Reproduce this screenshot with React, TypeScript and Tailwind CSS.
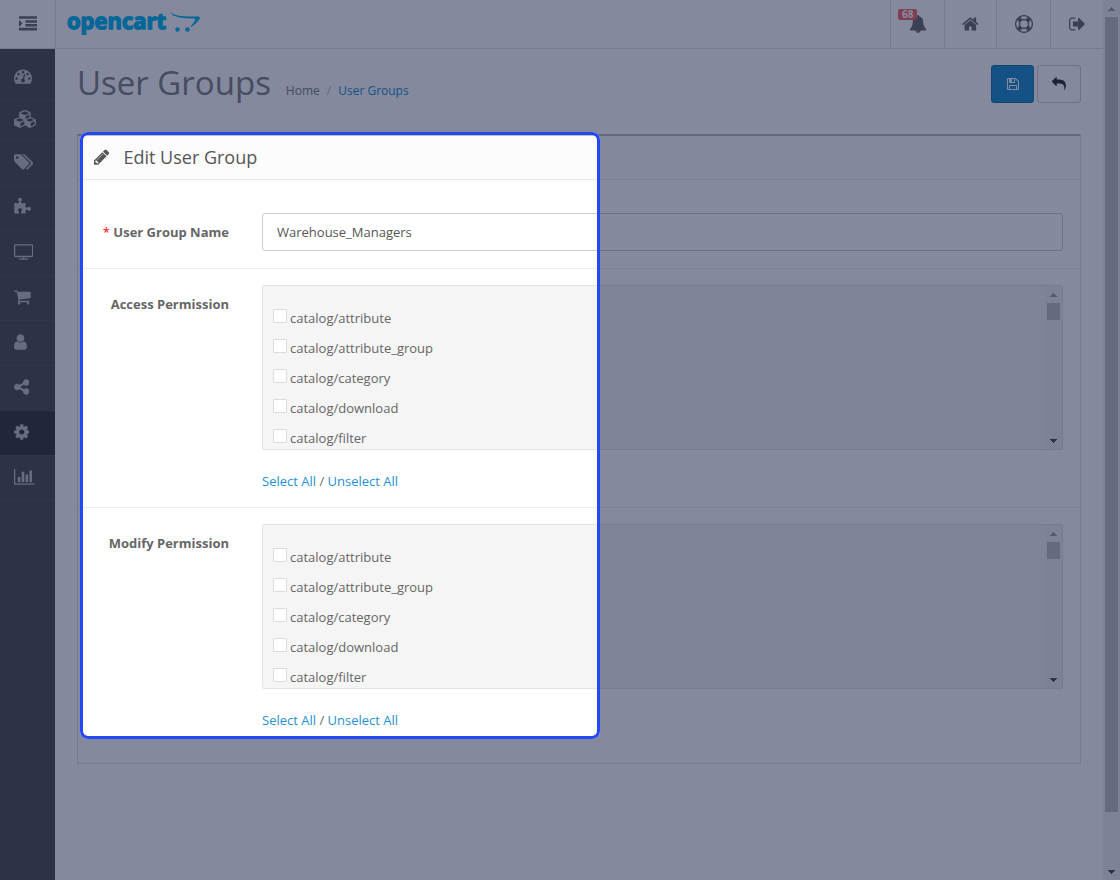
import { useState } from "react";

// [left edge, width, path] on a 1792 units high canvas
const icons: Record<string, [number, number, string]> = {
  indent: [0, 1792, "M352 832q0 14-9 23l-288 288q-9 9-23 9-13 0-22.500-9.500t-9.500-22.500v-576q0-13 9.500-22.500t22.500-9.500q14 0 23 9l288 288q9 9 9 23zM0 1280h1792v256H0zM640 896h1152v256H640zM640 512h1152v256H640zM0 128h1792v256H0z"],
  bell: [0, 1792, "M912 1696q0-16-16-16-59 0-101.500-42.500t-42.500-101.500q0-16-16-16t-16 16q0 73 51.500 124.500t124.500 51.500q16 0 16-16zm816-288q0 52-38 90t-90 38h-448q0 106-75 181t-181 75-181-75-75-181h-448q-52 0-90-38t-38-90q50-42 91-88t85-119.500 74.500-158.500 50-206 19.500-260q0-152 117-282.500t307-158.500q-8-19-8-39 0-40 28-68t68-28 68 28 28 68q0 20-8 39 190 28 307 158.500t117 282.500q0 139 19.500 260t50 206 74.500 158.500 85 119.500 91 88z"],
  home: [64, 1664, "M1472 992v480q0 26-19 45t-45 19h-384v-384h-256v384h-384q-26 0-45-19t-19-45v-480q0-1 .5-3t.5-3l575-474 575 474q1 2 1 6zm223-69l-62 74q-8 9-21 11h-3q-13 0-21-7l-692-577-692 577q-12 8-24 7-13-2-21-11l-62-74q-8-10-7-23.500t11-21.500l719-599q32-26 76-26t76 26l244 204v-195q0-14 9-23t23-9h192q14 0 23 9t9 23v408l219 182q10 8 11 21.500t-7 23.500z"],
  ring: [0, 1792, "M896 0q182 0 348 71t286 191 191 286 71 348-71 348-191 286-286 191-348 71-348-71-286-191-191-286-71-348 71-348 191-286 286-191 348-71zm0 128q-190 0-361 90l194 194q82-28 167-28t167 28l194-194q-171-90-361-90zm-678 1129l194-194q-28-82-28-167t28-167l-194-194q-90 171-90 361t90 361zm678 407q190 0 361-90l-194-194q-82 28-167 28t-167-28l-194 194q171 90 361 90zm0-384q159 0 271.500-112.500t112.500-271.500-112.500-271.500-271.500-112.500-271.500 112.500-112.500 271.500 112.500 271.500 271.500 112.500zm484-217l194 194q90-171 90-361t-90-361l-194 194q28 82 28 167t-28 167z"],
  signOut: [64, 1664, "M704 1440q0 4 1 20t.5 26.500-3 23.500-10 19.500-20.500 6.500h-320q-119 0-203.500-84.500t-84.500-203.500v-704q0-119 84.500-203.500t203.500-84.500h320q13 0 22.500 9.500t9.500 22.500q0 4 1 20t.5 26.500-3 23.500-10 19.500-20.500 6.500h-320q-66 0-113 47t-47 113v704q0 66 47 113t113 47h312l11.500 1 11.500 3 8 5.500 7 9 2 13.500zm928-544q0 26-19 45l-544 544q-19 19-45 19t-45-19-19-45v-288h-448q-26 0-45-19t-19-45v-384q0-26 19-45t45-19h448v-288q0-26 19-45t45-19 45 19l544 544q19 19 19 45z"],
  dashboard: [0, 1792, "M384 1152q0-53-37.500-90.500t-90.500-37.500-90.500 37.500-37.500 90.500 37.500 90.500 90.500 37.500 90.500-37.500 37.500-90.500zm192-448q0-53-37.500-90.500t-90.500-37.500-90.500 37.500-37.500 90.500 37.500 90.500 90.500 37.500 90.500-37.500 37.500-90.500zm428 481l101-382q6-26-7.500-48.500t-38.500-29.500-48 6.500-30 39.500l-101 382q-60 5-107 43.500t-63 98.500q-20 77 20 146t117 89 146-20 89-117q16-60-6-117t-72-91zm660-33q0-53-37.500-90.500t-90.500-37.500-90.500 37.500-37.500 90.500 37.500 90.500 90.500 37.500 90.500-37.500 37.500-90.500zm-640-640q0-53-37.500-90.500t-90.500-37.500-90.500 37.500-37.500 90.500 37.500 90.500 90.500 37.500 90.500-37.500 37.500-90.500zm448 192q0-53-37.500-90.500t-90.500-37.500-90.500 37.500-37.500 90.500 37.500 90.500 90.500 37.500 90.500-37.500 37.500-90.500zm320 448q0 261-141 483-19 29-54 29h-1402q-35 0-54-29-141-221-141-483 0-182 71-348t191-286 286-191 348-71 348 71 286 191 191 286 71 348z"],
  cubes: [0, 2304, "M640 1632l384-192v-314l-384 164v342zm-64-454l404-173-404-173-404 173zm1088 454l384-192v-314l-384 164v342zm-64-454l404-173-404-173-404 173zm-448-293l384-165v-266l-384 164v267zm-64-379l441-189-441-189-441 189zm1088 518v416q0 36-19 67t-52 47l-448 224q-25 14-57 14t-57-14l-448-224q-4-2-7-4-2 2-7 4l-448 224q-25 14-57 14t-57-14l-448-224q-33-16-52-47t-19-67v-416q0-38 21.500-70t56.500-48l434-186v-400q0-38 21.500-70t56.500-48l448-192q23-10 50-10t50 10l448 192q35 16 56.500 48t21.500 70v400l434 186q36 16 57 48t21 70z"],
  tags: [0, 1920, "M448 448q0-53-37.500-90.500t-90.500-37.500-90.500 37.500-37.500 90.500 37.500 90.500 90.500 37.500 90.500-37.500 37.500-90.500zm1067 576q0 53-37 90l-491 492q-39 37-91 37-53 0-90-37l-715-716q-38-37-64.500-101t-26.500-117v-416q0-52 38-90t90-38h416q53 0 117 26.500t102 64.500l715 714q37 39 37 91zm384 0q0 53-37 90l-491 492q-39 37-91 37-36 0-59-14t-53-45l470-470q37-37 37-90 0-52-37-91l-715-714q-38-38-102-64.500t-117-26.500h224q53 0 117 26.500t102 64.500l715 714q37 39 37 91z"],
  puzzle: [64, 1728, "M1755 1083q0 81-44.500 135t-123.500 54q-41 0-77.500-17.500t-59-38-56.500-38-71-17.500q-110 0-110 124 0 39 16 115t15 115v5q-22 0-33 1-34 3-97.500 11.500t-115.500 13.500-98 5q-61 0-103-26.500t-42-83.500q0-37 17.500-71t38-56.500 38-59 17.500-77.500q0-79-54-123.500t-135-44.500q-84 0-143 45.500t-59 127.500q0 43 15 83t33.500 64.500 33.500 53 15 50.500q0 45-46 89-37 35-117 35-95 0-245-24-9-2-27.500-4t-27.500-4l-13-2q-1 0-3-1-2 0-2-1v-1024q2 1 17.500 3.500t34 5 21.500 3.500q150 24 245 24 80 0 117-35 46-44 46-89 0-22-15-50.500t-33.500-53-33.500-64.500-15-83q0-82 59-127.500t144-45.500q80 0 134 44.500t54 123.500q0 41-17.500 77.500t-38 59-38 56.500-17.500 71q0 57 42 83.500t103 26.500q64 0 180-15t163-17v2q-1 2-3.500 17.500t-5 34-3.500 21.500q-24 150-24 245 0 80 35 117 44 46 89 46 22 0 50.500-15t53-33.500 64.500-33.500 83-15q82 0 127.500 59t45.500 143z"],
  desktop: [0, 1920, "M1792 1248v-960q0-13-9.500-22.500t-22.500-9.500h-1600q-13 0-22.500 9.500t-9.500 22.500v960q0 13 9.500 22.500t22.500 9.500h1600q13 0 22.500-9.500t9.500-22.500zm128-960v960q0 66-47 113t-113 47h-736v128h352q14 0 23 9t9 23v64q0 14-9 23t-23 9h-832q-14 0-23-9t-9-23v-64q0-14 9-23t23-9h352v-128h-736q-66 0-113-47t-47-113v-960q0-66 47-113t113-47h1600q66 0 113 47t47 113z"],
  cart: [64, 1664, "M704 1536q0 52-38 90t-90 38-90-38-38-90 38-90 90-38 90 38 38 90zm896 0q0 52-38 90t-90 38-90-38-38-90 38-90 90-38 90 38 38 90zm128-1088v512q0 24-16.500 42.500t-40.500 21.500l-1044 122q13 60 13 70 0 16-24 64h920q26 0 45 19t19 45-19 45-45 19h-1024q-26 0-45-19t-19-45q0-11 8-31.500t16-36 21.500-40 15.500-29.500l-177-823h-204q-26 0-45-19t-19-45 19-45 45-19h256q16 0 28.500 6.500t19.500 15.500 13 24.500 8 26 5.500 29.500 4.500 26h1201q26 0 45 19t19 45z"],
  user: [256, 1280, "M1536 1399q0 109-62.500 187t-150.500 78h-854q-88 0-150.500-78t-62.500-187q0-85 8.500-160.500t31.500-152 58.500-131 94-89 134.500-34.500q131 128 313 128t313-128q76 0 134.500 34.500t94 89 58.500 131 31.500 152 8.500 160.500zm-256-887q0 159-112.500 271.500t-271.500 112.500-271.500-112.500-112.500-271.500 112.500-271.500 271.500-112.500 271.500 112.500 112.500 271.500z"],
  share: [128, 1536, "M1344 1024q133 0 226.500 93.500t93.500 226.500-93.500 226.500-226.500 93.500-226.500-93.500-93.500-226.500q0-12 2-34l-360-180q-92 86-218 86-133 0-226.500-93.500t-93.500-226.500 93.500-226.500 226.500-93.500q126 0 218 86l360-180q-2-22-2-34 0-133 93.500-226.500t226.500-93.500 226.500 93.500 93.500 226.500-93.500 226.500-226.500 93.500q-126 0-218-86l-360 180q2 22 2 34t-2 34l360 180q92-86 218-86z"],
  cog: [128, 1536, "M1152 896q0-106-75-181t-181-75-181 75-75 181 75 181 181 75 181-75 75-181zm512-109v222q0 12-8 23t-20 13l-185 28q-19 54-39 91 35 50 107 138 10 12 10 25t-9 23q-27 37-99 108t-94 71q-12 0-26-9l-138-108q-44 23-91 38-16 136-29 186-7 28-36 28h-222q-14 0-24.500-8.500t-11.500-21.500l-28-184q-49-16-90-37l-141 107q-10 9-25 9-14 0-25-11-126-114-165-168-7-10-7-23 0-12 8-23 15-21 51-66.500t54-70.500q-27-50-41-99l-183-27q-13-2-21-12.500t-8-23.500v-222q0-12 8-23t19-13l186-28q14-46 39-92-40-57-107-138-10-12-10-24 0-10 9-23 26-36 98.500-107.500t94.500-71.500q13 0 26 10l138 107q44-23 91-38 16-136 29-186 7-28 36-28h222q14 0 24.500 8.500t11.500 21.500l28 184q49 16 90 37l142-107q9-9 24-9 13 0 25 10 129 119 165 170 7 8 7 22 0 12-8 23-15 21-51 66.500t-54 70.500q26 50 41 98l183 28q13 2 21 12.500t8 23.500z"],
  chart: [0, 2048, "M640 896v512h-256v-512h256zm384-512v1024h-256v-1024h256zm1024 1152v128h-2048v-1536h128v1408h1920zm-640-896v768h-256v-768h256zm384-384v1152h-256v-1152h256z"],
  save: [128, 1536, "M512 1536h768v-384h-768v384zm896 0h128v-896q0-14-10-38.500t-20-34.500l-281-281q-10-10-34-20t-39-10v416q0 40-28 68t-68 28h-576q-40 0-68-28t-28-68v-416h-128v1280h128v-416q0-40 28-68t68-28h832q40 0 68 28t28 68v416zm-384-928v-320q0-13-9.500-22.500t-22.500-9.500h-192q-13 0-22.500 9.500t-9.500 22.500v320q0 13 9.500 22.500t22.500 9.500h192q13 0 22.500-9.500t9.500-22.500zm640 32v928q0 40-28 68t-68 28h-1344q-40 0-68-28t-28-68v-1344q0-40 28-68t68-28h928q40 0 88 20t76 48l280 280q28 28 48 76t20 88z"],
  reply: [0, 1792, "M1792 1120q0 166-127 451-3 7-10.500 24t-13.500 30-13 22q-12 17-28 17-15 0-23.500-10t-8.500-25q0-9 2.500-26.500t2.500-23.500q5-68 5-123 0-112-19.500-200.500t-54-153.500-89-112-115-79.500-138.500-48.500-156.500-24.500-175.500-7.500h-224v256q0 26-19 45t-45 19-45-19l-512-512q-19-19-19-45t19-45l512-512q19-19 45-19t45 19 19 45v256h224q713 0 875 403 53 134 53 333z"],
  pencil: [128, 1536, "M491 1536l91-91-235-235-91 91v107h128v128h107zm523-928q0-22-22-22-10 0-17 7l-542 542q-7 7-7 17 0 22 22 22 10 0 17-7l542-542q7-7 7-17zm-54-192l416 416-832 832h-416v-416zm683 96q0 53-37 90l-166 166-416-416 166-165q36-38 90-38 53 0 91 38l235 234q37 39 37 91z"],
};

function Icon({ name, className = "h-[18px]" }: { name: string; className?: string }) {
  const [x, width, d] = icons[name];
  return (
    <svg className={`${className} w-auto`} viewBox={`${x} 0 ${width} 1792`} fill="currentColor" aria-hidden="true">
      <path d={d} />
    </svg>
  );
}

function Logo() {
  return (
    <svg className="h-10 w-[136px]" viewBox="0 0 136 40" fill="#00b9f5" role="img" aria-label="OpenCart">
      <text x="1" y="25" fontFamily="'Open Sans', sans-serif" fontWeight="700" fontSize="22" stroke="#00b9f5" strokeWidth="1.4" strokeLinejoin="round" textRendering="geometricPrecision">
        opencart
      </text>
      <path d="M104 8q5 3.800 13 4.200 8 .3 15 .3 3 .1 1.500 2.700-2.500 3.800-8 7.800l-.9-.5q3.400-3.700 4.600-6.700.5-1.200-1.500-1.300-8 0-14-1Q106 12 104 8z" />
      <circle cx="111.500" cy="25.500" r="2.200" />
      <circle cx="121.500" cy="25.500" r="2.200" />
    </svg>
  );
}

function Arrow({ down = false }: { down?: boolean }) {
  return (
    <div className="flex h-[17px] w-full shrink-0 items-center justify-center">
      <svg className={down ? "h-1 w-[7px] text-[#505050]" : "h-1 w-[7px] text-[#a3a3a3]"} viewBox="0 0 7 4" fill="currentColor" aria-hidden="true" shapeRendering="crispEdges">
        <path d={down ? "M0 0h7v1h-1v1h-1v1h-1v1h-1v-1h-1v-1h-1v-1h-1z" : "M0 4h7v-1h-1v-1h-1v-1h-1v-1h-1v1h-1v1h-1v1h-1z"} />
      </svg>
    </div>
  );
}

function Scrollbar({ thumb }: { thumb: string }) {
  return (
    <div className="flex w-[17px] shrink-0 flex-col bg-[#f1f1f1]">
      <Arrow />
      <div className="flex-1 px-0.5">
        <div className={`${thumb} bg-[#c1c1c1]`} />
      </div>
      <Arrow down />
    </div>
  );
}

const permissions = [
  "catalog/attribute",
  "catalog/attribute_group",
  "catalog/category",
  "catalog/download",
  "catalog/filter",
];

function PermissionGroup({ id, title }: { id: string; title: string }) {
  const [selected, setSelected] = useState<string[]>([]);

  function toggle(name: string) {
    setSelected(selected.includes(name) ? selected.filter((s) => s !== name) : [...selected, name]);
  }

  return (
    <div role="group" aria-labelledby={id} className="flex gap-[33px] border-t border-[#ededed] py-4 pr-[17px]">
      <div id={id} className="w-[151px] shrink-0 pt-[9px] text-right font-bold">{title}</div>
      <div className="min-w-0 flex-1">
        <div className="flex h-[165px] overflow-hidden rounded-xs border border-[#e3e3e3] bg-[#f5f5f5]">
          <div className="flex-1 overflow-hidden pt-[17px] pl-2.5">
            {permissions.map((p) => (
              <label key={p} className="flex h-[30px] items-center gap-[3px]">
                <input
                  type="checkbox"
                  checked={selected.includes(p)}
                  onChange={() => toggle(p)}
                  className="mb-1 size-3.5 appearance-none rounded-[1px] border border-[#dcdcdc] bg-white checked:bg-[#1e91cf]"
                />
                {p}
              </label>
            ))}
          </div>
          <Scrollbar thumb="h-[17px]" />
        </div>
        <div className="mt-[21px]">
          <a href="#" className="text-[#1e91cf]" onClick={() => setSelected(permissions)}>Select All</a>
          {" / "}
          <a href="#" className="text-[#1e91cf]" onClick={() => setSelected([])}>Unselect All</a>
        </div>
      </div>
    </div>
  );
}

const menu = [
  { icon: "dashboard", label: "Dashboard", style: "h-[45px]" },
  { icon: "cubes", label: "Catalog", style: "h-[41px]" },
  { icon: "tags", label: "Tags", style: "h-[45px]" },
  { icon: "puzzle", label: "Extensions", style: "h-[45px]" },
  { icon: "desktop", label: "Design", style: "h-[45px]" },
  { icon: "cart", label: "Sales", style: "h-[45px]" },
  { icon: "user", label: "Customers", style: "h-[45px]" },
  { icon: "share", label: "Marketing", style: "h-[45px]" },
  { icon: "cog", label: "System", style: "h-[45px] bg-[#393939]" },
  { icon: "chart", label: "Reports", style: "h-[45px]" },
];

export default function App() {
  const [name, setName] = useState("Warehouse_Managers");

  return (
    <div className="flex min-h-screen overflow-hidden bg-white font-['Open_Sans',sans-serif] text-[13px] leading-5 text-[#666]">
      <div className="flex min-w-0 flex-1 flex-col">
        <header className="flex h-[49px] border-b border-[#e1e1e1] text-[#6d6d6d]">
          <button type="button" aria-label="Toggle menu" className="flex w-14 items-center justify-center border-r border-[#e1e1e1]">
            <Icon name="indent" />
          </button>
          <a href="#" className="mt-1 ml-2.5">
            <Logo />
          </a>
          <nav className="ml-auto flex *:flex *:items-center *:justify-center *:border-l *:border-[#e1e1e1]">
            <a href="#" aria-label="Notifications" className="relative w-[54px]">
              <Icon name="bell" />
              <span className="absolute top-[9px] left-[7px] rounded-xs bg-[#f56b6b] px-1 text-[10px] leading-[11px] font-bold text-white">68</span>
            </a>
            <a href="#" aria-label="Home" className="w-[52px]"><Icon name="home" /></a>
            <a href="#" aria-label="Help" className="w-[54px]"><Icon name="ring" /></a>
            <a href="#" aria-label="Log out" className="w-[53px]"><Icon name="signOut" /></a>
          </nav>
        </header>

        <div className="flex flex-1">
          <nav className="w-[55px] shrink-0 bg-[#515151] pt-1.5">
            {menu.map((m) => (
              <a
                key={m.icon}
                href="#"
                aria-label={m.label}
                className={`flex items-center border-b border-[#585858] pb-[3px] pl-3.5 text-[#c4c4c4] ${m.style}`}
              >
                <Icon name={m.icon} />
              </a>
            ))}
          </nav>

          <main className="min-w-0 flex-1 px-[22px] pt-4">
            <div className="flex justify-between">
              <div className="flex items-baseline">
                <h1 className="text-[33px] leading-9 text-[#848484]">User Groups</h1>
                <nav className="ml-[15px] flex gap-[7px] text-xs" aria-label="Breadcrumb">
                  <a href="#" className="text-[#848484]">Home</a>
                  <span className="text-[#bbb]">/</span>
                  <a href="#" className="text-[#1e91cf]">User Groups</a>
                </nav>
              </div>
              <div className="flex gap-[3px]">
                <button type="button" aria-label="Save" className="flex h-[38px] w-[43px] items-center justify-center rounded-[3px] border border-[#1978ab] bg-[#1e91cf] text-white">
                  <Icon name="save" className="h-3.5" />
                </button>
                <a href="#" aria-label="Cancel" className="flex h-[38px] w-11 items-center justify-center rounded-[3px] border border-[#ccc] text-[#333]">
                  <Icon name="reply" className="h-3.5" />
                </a>
              </div>
            </div>

            <div className="relative mt-[31px]">
              <section className="border border-t-2 border-[#e1e1e1] border-t-[#bfbfbf]">
                <h2 className="flex h-11 items-center gap-3.5 border-b border-[#e8e8e8] bg-[#fcfcfc] pb-0.5 pl-4 text-[18px] text-[#555]">
                  <Icon name="pencil" />
                  Edit User Group
                </h2>
                <form className="pt-[17px] pb-[17px]">
                  <div className="flex gap-[33px] pt-4 pr-[17px] pb-[17px]">
                    <label htmlFor="group-name" className="w-[151px] shrink-0 pt-[9px] text-right font-bold">
                      <span className="font-normal text-[#f00]">* </span>User Group Name
                    </label>
                    <input
                      id="group-name"
                      type="text"
                      value={name}
                      onChange={(e) => setName(e.target.value)}
                      className="h-[38px] min-w-0 flex-1 rounded-[3px] border border-[#ccc] bg-white px-3.5 text-[#555]"
                    />
                  </div>
                  <PermissionGroup id="access" title="Access Permission" />
                  <PermissionGroup id="modify" title="Modify Permission" />
                </form>
              </section>

              {/* spotlight: everything outside of the frame is dimmed by its shadow */}
              <div className="pointer-events-none absolute -top-0.5 bottom-[25px] left-[3px] w-[520px] rounded-lg border-[3px] border-[#2448f5] shadow-[0_0_0_2000px_rgba(10,20,60,0.5)]" />
            </div>
          </main>
        </div>
      </div>
      <Scrollbar thumb="h-[94%]" />
    </div>
  );
}
